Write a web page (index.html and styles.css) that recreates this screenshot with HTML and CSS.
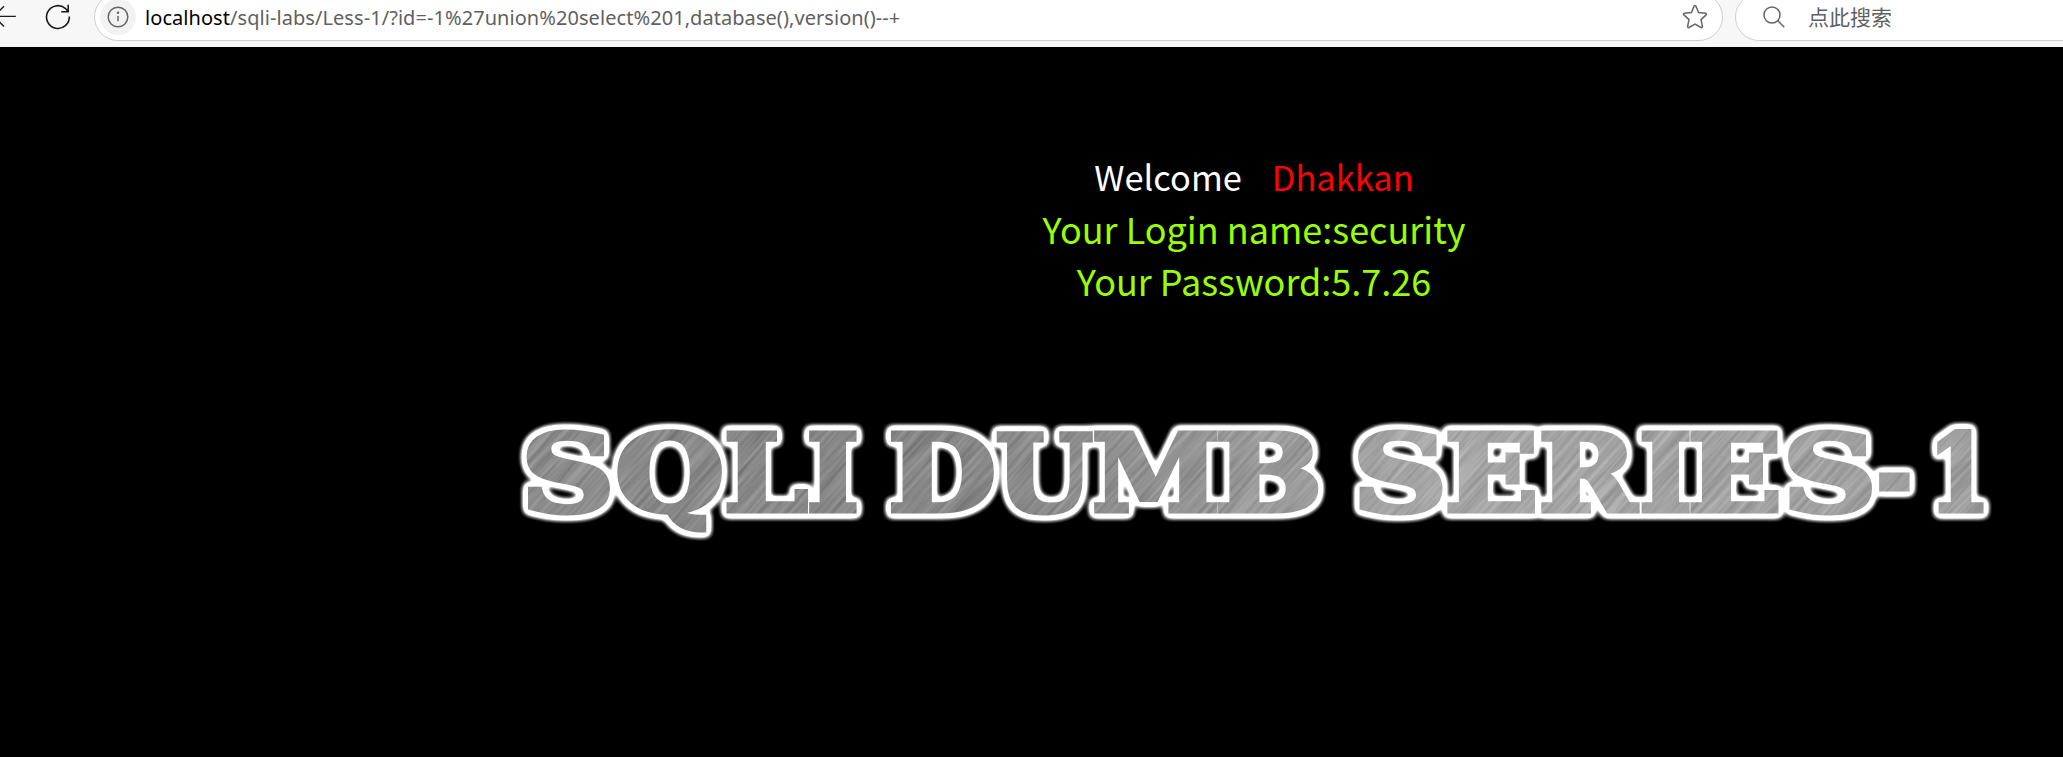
FILE: index.html
```html
<!DOCTYPE html>
<html lang="en">
<head>
<meta charset="utf-8">
<title>Less-1 Error Based- String</title>
<link rel="stylesheet" href="styles.css">
</head>
<body>
<header class="toolbar">
  <svg class="back" width="17" height="34" viewBox="0 0 17 34"><path d="M15.8 16.4H-5M4 6.3L-6 16.4 4 26.6"/></svg>
  <svg class="reload" width="28" height="34" viewBox="44 0 28 34"><path d="M69.3 16.5A11.4 11.4 0 1 1 65.2 8.3L68 11.3M68.2 4.8V11.7H61.2"/></svg>
  <div class="address">
    <span class="info"><svg width="36" height="36" viewBox="0 0 36 36"><circle cx="18" cy="18" r="9.8"/><path d="M18 17V22.2"/><circle class="dot" cx="18" cy="13.8" r="1.2"/></svg></span>
    <span class="url"><b>localhost</b>/sqli-labs/Less-1/?id=-1%27union%20select%201,database(),version()--+</span>
    <svg class="star" width="26" height="26" viewBox="0 0 26 26"><path d="M12.1 2.2Q13 .8 13.9 2.2L16.6 8.5 23.6 9.3Q25 9.8 24.1 10.9L19 15.6 20.4 22.5Q20.4 24 19 23.5L13 20.1 7 23.5Q5.6 24 5.6 22.5L7 15.6 1.9 10.9Q1 9.8 2.4 9.3L9.4 8.5Z"/></svg>
  </div>
  <div class="search">
    <svg width="24" height="24" viewBox="0 0 24 24"><circle cx="10" cy="10" r="8"/><path d="M15.8 15.8L22.3 22.3"/></svg>
    <span lang="zh">点此搜索</span>
  </div>
</header>
<main class="page">
  <div class="message">
    <p class="welcome">Welcome<span class="name">Dhakkan</span></p>
    <p>Your Login name:security</p>
    <p>Your Password:5.7.26</p>
  </div>
  <svg class="banner" width="1540" height="160" viewBox="500 400 1540 160">
    <defs>
      <linearGradient id="tone" x1="500" x2="2000" y1="0" y2="0" gradientUnits="userSpaceOnUse">
        <stop offset="0" stop-color="#8e8e8e"/><stop offset=".12" stop-color="#868686"/><stop offset=".3" stop-color="#868686"/>
        <stop offset=".42" stop-color="#909090"/><stop offset=".53" stop-color="#9e9e9e"/><stop offset=".62" stop-color="#aaa"/><stop offset="1" stop-color="#a0a0a0"/>
      </linearGradient>
      <filter id="grain" x="0" y="0" width="1" height="1" color-interpolation-filters="sRGB">
        <feTurbulence type="fractalNoise" baseFrequency=".012 .28" numOctaves="3" seed="4"/>
        <feColorMatrix values="1.6 0 0 0 -.25  1.6 0 0 0 -.25  1.6 0 0 0 -.25  0 0 0 0 .15"/>
      </filter>
      <pattern id="metal" width="2063" height="757" patternUnits="userSpaceOnUse">
        <rect width="2063" height="757" fill="url(#tone)"/>
        <rect x="-900" y="-900" width="1800" height="1800" transform="translate(1260 470) rotate(-48)" filter="url(#grain)"/>
      </pattern>
      <filter id="glow" x="500" y="400" width="1540" height="160" filterUnits="userSpaceOnUse" color-interpolation-filters="sRGB">
        <feMorphology in="SourceAlpha" operator="dilate" radius="2"/>
        <feGaussianBlur stdDeviation="3.6"/>
        <feColorMatrix values="0 0 0 0 1  0 0 0 0 1  0 0 0 0 1  0 0 0 4.6 -.1" result="halo"/>
        <feMerge><feMergeNode in="halo"/><feMergeNode in="SourceGraphic"/></feMerge>
      </filter>
    </defs>
    <g class="letters" filter="url(#glow)">
      <text x="521" y="510.5" textLength="93.7" lengthAdjust="spacingAndGlyphs">S</text>
      <text x="615.1" y="510.5" textLength="109.4" lengthAdjust="spacingAndGlyphs">Q</text>
      <text x="723.8" y="510.5" textLength="84.1" lengthAdjust="spacingAndGlyphs">L</text>
      <text x="806.5" y="510.5" textLength="52.6" lengthAdjust="spacingAndGlyphs">I</text>
      <text x="888.1" y="510.5" textLength="108.1" lengthAdjust="spacingAndGlyphs">D</text>
      <text x="995.6" y="510.5" textLength="97.1" lengthAdjust="spacingAndGlyphs">U</text>
      <text x="1092" y="510.5" textLength="127.9" lengthAdjust="spacingAndGlyphs">M</text>
      <text x="1214.5" y="510.5" textLength="107.9" lengthAdjust="spacingAndGlyphs">B</text>
      <text x="1352.5" y="510.5" textLength="94.9" lengthAdjust="spacingAndGlyphs">S</text>
      <text x="1444.6" y="510.5" textLength="93.9" lengthAdjust="spacingAndGlyphs">E</text>
      <text x="1538.4" y="510.5" textLength="97.7" lengthAdjust="spacingAndGlyphs">R</text>
      <text x="1639" y="510.5" textLength="53.2" lengthAdjust="spacingAndGlyphs">I</text>
      <text x="1687.6" y="510.5" textLength="94.5" lengthAdjust="spacingAndGlyphs">E</text>
      <text x="1782.5" y="510.5" textLength="94.3" lengthAdjust="spacingAndGlyphs">S</text>
      <text x="1876.6" y="510.5" textLength="35.7" lengthAdjust="spacingAndGlyphs">-</text>
      <text x="1928.4" y="510.5" textLength="61.8" lengthAdjust="spacingAndGlyphs">1</text>
    </g>
  </svg>
</main>
</body>
</html>
```
FILE: styles.css
```css
* { box-sizing: border-box; }
body { margin: 0; height: 757px; background: #000; overflow: hidden; }
svg { display: block; flex: none; }
.toolbar { display: flex; height: 47px; background: #f7f7f7; overflow: hidden; }
.toolbar svg { fill: none; stroke: #1a1a1a; stroke-width: 1.4; }
.reload { margin-left: 27px; }
.toolbar .reload { stroke-width: 1.6; }
.address, .search {
  display: flex; align-items: center; flex: none;
  height: 48px; margin-top: -7px;
  border: 1px solid #cfcfcf; border-radius: 24px; background: #fff;
}
.address { width: 1629px; margin-left: 22px; padding: 0 14px 0 5px; }
.info { width: 36px; height: 36px; border-radius: 50%; background: #f2f2f2; }
.toolbar .info svg, .toolbar .star, .toolbar .search svg { stroke: #666; stroke-width: 1.5; }
.toolbar .info .dot { fill: #666; stroke: none; }
.url {
  flex: 1; margin-left: 9px; padding-top: 2px; color: #5f5f5f; white-space: nowrap;
  font: 20px/28px "Noto Sans", sans-serif; letter-spacing: .06px;
}
.url b { font-weight: 400; color: #000; }
.search { width: 400px; margin-left: 12px; padding-left: 26px; }
.search span { margin-left: 22px; padding-bottom: 2px; color: #5f5f5f; font: 21px/28px "Noto Sans CJK SC", sans-serif; white-space: nowrap; }
.page { display: flex; flex-direction: column; }
.message {
  width: 424px; margin: 103px 0 0 1042px; color: #9f0;
  font: 36px/52px "Noto Sans CJK SC", sans-serif; text-align: center; white-space: nowrap;
}
.message p { margin: 0; height: 52px; }
.message .welcome { color: #fff; font-size: 34.4px; }
.name { margin-left: 30px; color: #f00; }
.banner { margin: 94px 0 0 500px; }
.letters text {
  font: bold 107px "DejaVu Serif", serif;
  fill: url(#metal); stroke: url(#metal); stroke-width: 5px;
}
```
